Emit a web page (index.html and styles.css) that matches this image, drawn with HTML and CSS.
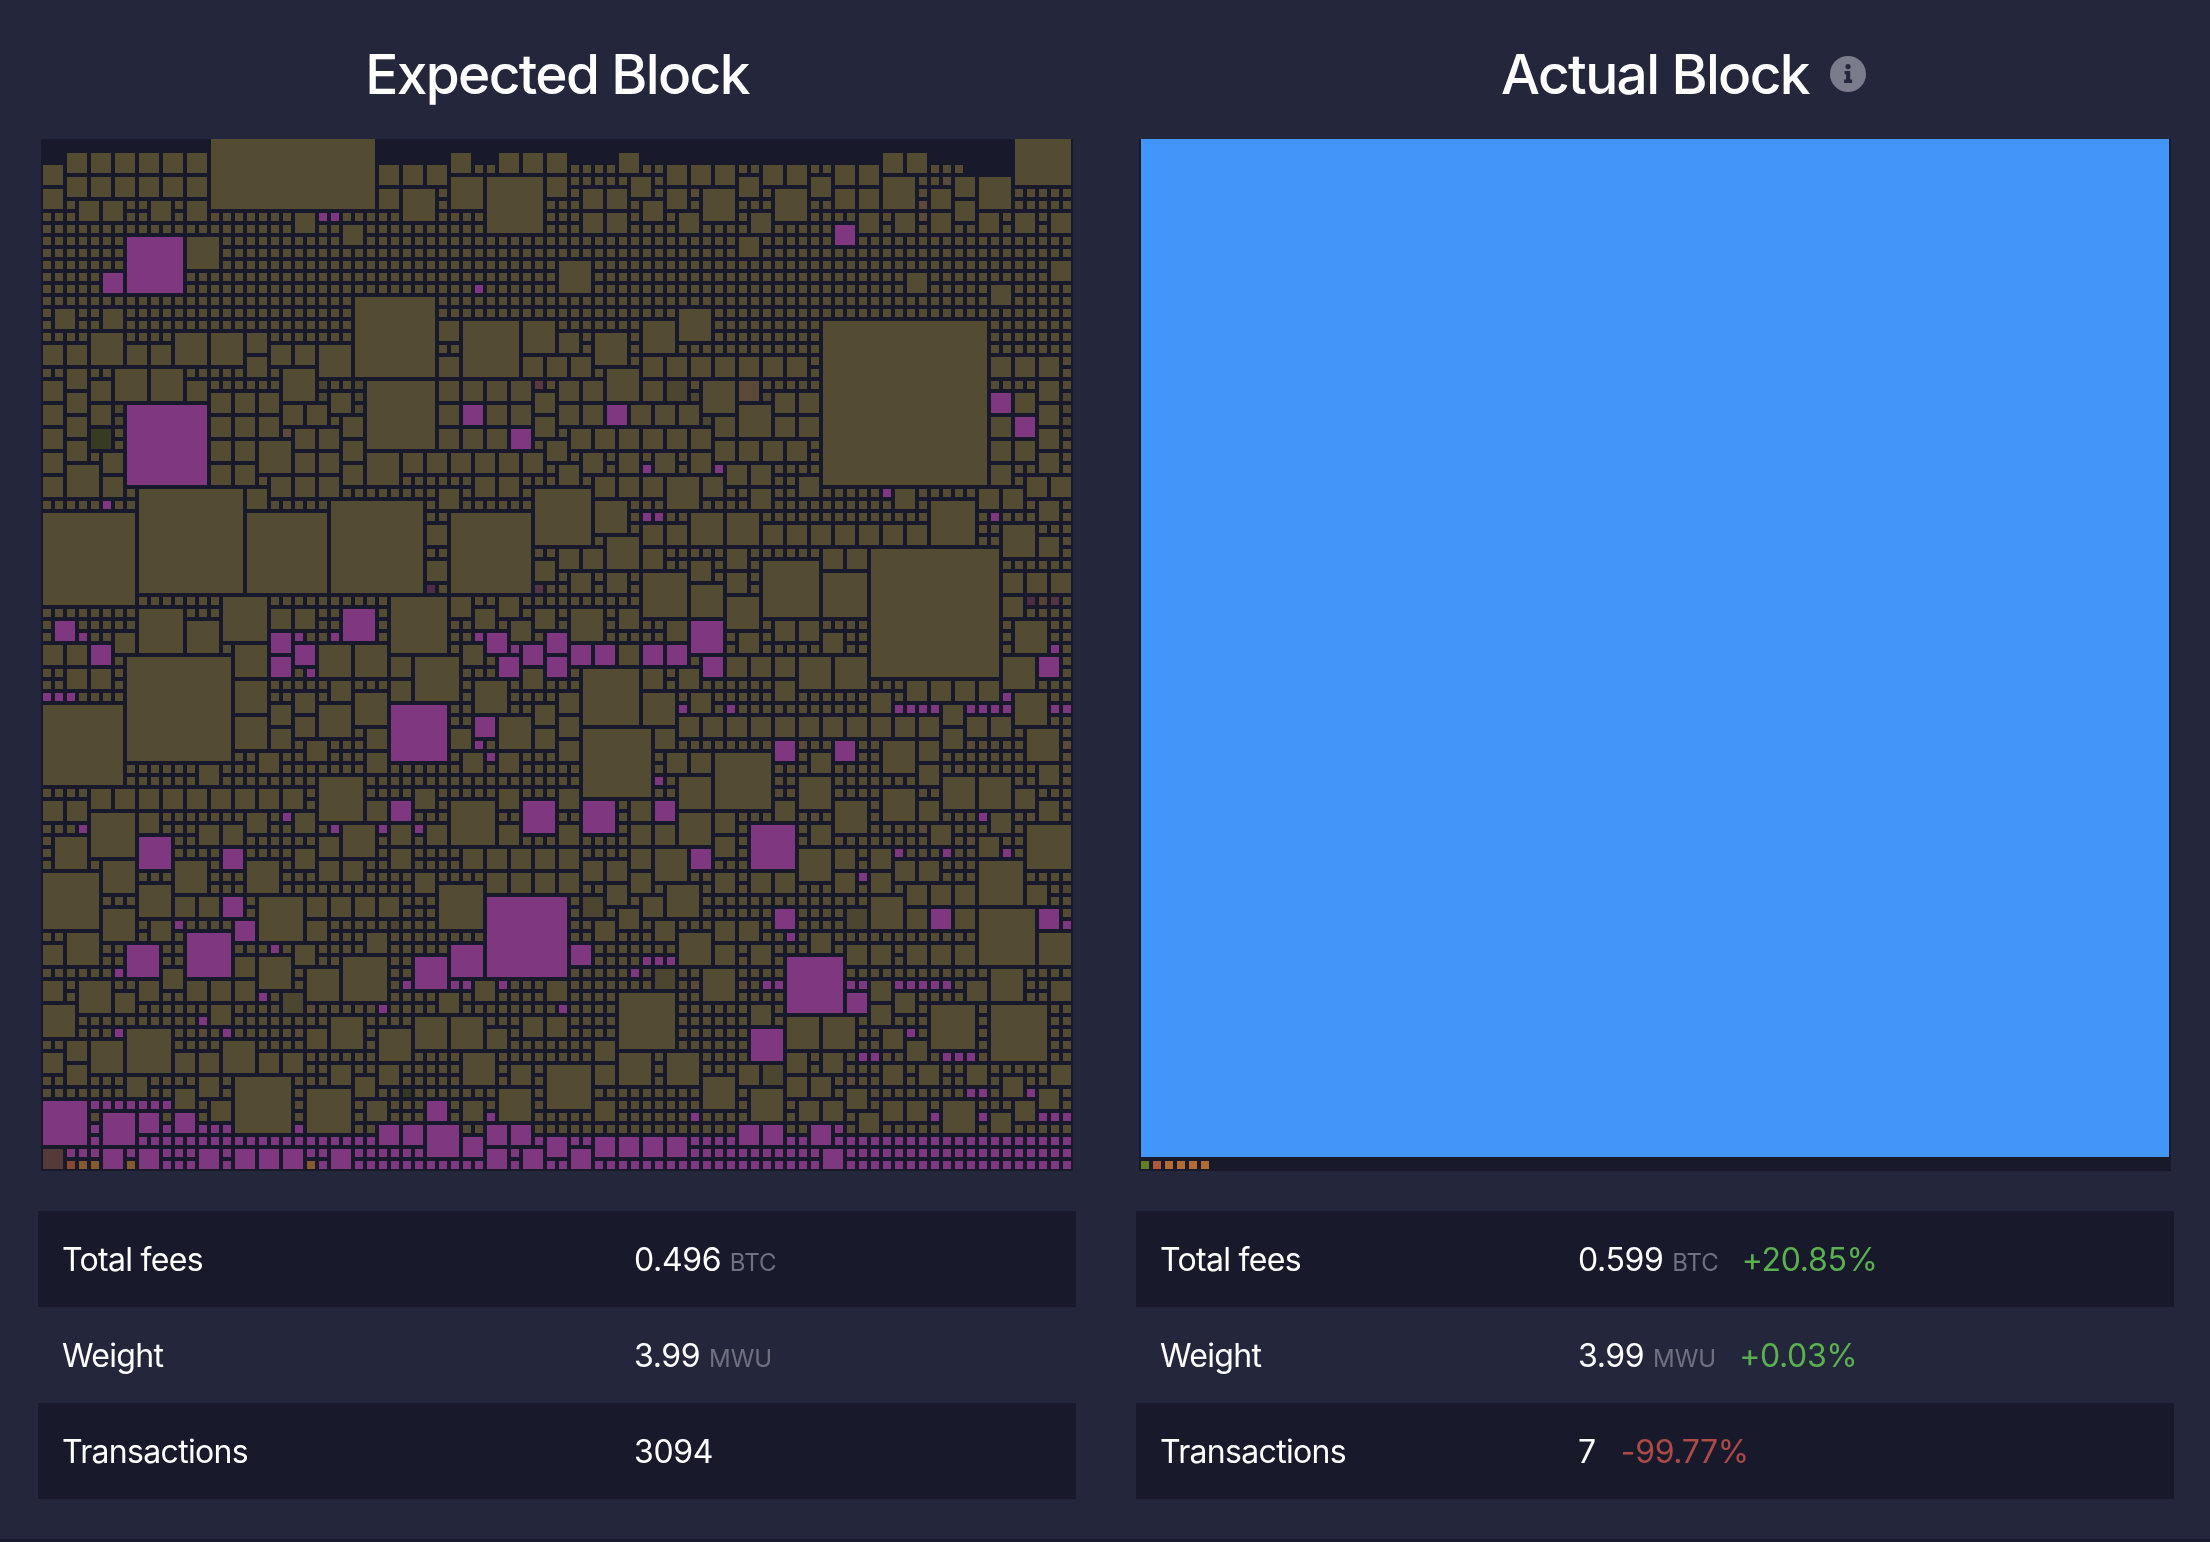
FILE: index.html
```html
<!DOCTYPE html>
<html lang="en">
<head>
<meta charset="utf-8">
<title>Block audit</title>
<link rel="stylesheet" href="styles.css">
</head>
<body>
<main class="audit">
  <section class="panel">
    <h3 class="panel-title"><span class="title-text">Expected Block</span></h3>
    <canvas class="block-view" id="expected" width="1032" height="1032"></canvas>
    <div class="stats stats-expected">
      <div class="stat-row"><span class="stat-label">Total fees</span><span class="stat-value">0.496 <span class="unit">BTC</span></span></div>
      <div class="stat-row"><span class="stat-label">Weight</span><span class="stat-value">3.99 <span class="unit">MWU</span></span></div>
      <div class="stat-row"><span class="stat-label">Transactions</span><span class="stat-value">3094</span></div>
    </div>
  </section>
  <section class="panel">
    <h3 class="panel-title"><span class="title-text">Actual Block<svg class="info-icon" viewBox="0 0 36 36" aria-hidden="true"><circle cx="18" cy="18" r="18" fill="#7a7c8b"/><circle cx="18" cy="10.6" r="2.6" fill="#24273c"/><path d="M14.6 15h5.6v8.6h1.9V27h-8v-3.4h2V18.2h-1.5z" fill="#24273c"/></svg></span></h3>
    <div class="block-view actual">
      <div class="actual-main"></div>
      <div class="actual-small">
        <i class="tx tx-green"></i><i class="tx tx-red"></i><i class="tx tx-orange"></i><i class="tx tx-orange"></i><i class="tx tx-orange"></i><i class="tx tx-orange"></i>
      </div>
    </div>
    <div class="stats stats-actual">
      <div class="stat-row"><span class="stat-label">Total fees</span><span class="stat-value">0.599 <span class="unit">BTC</span><span class="diff up">+20.85%</span></span></div>
      <div class="stat-row"><span class="stat-label">Weight</span><span class="stat-value">3.99 <span class="unit">MWU</span><span class="diff up">+0.03%</span></span></div>
      <div class="stat-row"><span class="stat-label">Transactions</span><span class="stat-value">7<span class="diff down">-99.77%</span></span></div>
    </div>
  </section>
</main>
<div class="footer-line"></div>
<script src="script.js"></script>
</body>
</html>
```
FILE: styles.css
```css
* { box-sizing: border-box; }
html, body { margin: 0; padding: 0; }
body {
  width: 2210px;
  height: 1542px;
  overflow: hidden;
  background: #24273c;
  color: #fff;
  font-family: Inter, "Liberation Sans", sans-serif;
  display: flex;
  flex-direction: column;
}
.audit {
  flex: 1;
  display: grid;
  grid-template-columns: 1038px 1038px;
  column-gap: 60px;
  padding: 0 36px 0 38px;
}
.panel { display: flex; flex-direction: column; }
.panel-title {
  margin: 0;
  height: 139px;
  padding-top: 40px;
  font-size: 55px;
  line-height: 68px;
  font-weight: 500;
  letter-spacing: -1.65px;
  text-align: center;
  color: #fff;
}
.title-text { position: relative; }
.info-icon {
  position: absolute;
  left: calc(100% + 21px);
  top: 15px;
  width: 36px;
  height: 36px;
}
.block-view {
  display: block;
  width: 1032px;
  height: 1032px;
  margin-left: 3px;
  background: #181a2c;
}
.actual { padding: 0 2px 2px; }
.actual-main { height: 1018px; background: #4296fa; }
.actual-small { display: flex; gap: 4px; margin-top: 4px; }
.tx { display: block; width: 8px; height: 8px; }
.tx-green { background: #5f8023; }
.tx-red { background: #ad5a3b; }
.tx-orange { background: #b46b30; }
.stats { margin-top: 40px; }
.stat-row {
  display: grid;
  height: 96px;
  align-items: center;
  padding-left: 24px;
  font-size: 32px;
  letter-spacing: -0.35px;
}
.stat-label { letter-spacing: -0.68px; }
.stat-row:nth-child(odd) { background: #181a2c; }
.stats-expected .stat-row { grid-template-columns: 572px 1fr; }
.stats-actual .stat-row { grid-template-columns: 418px 1fr; }
.unit {
  font-size: 24px;
  letter-spacing: 0;
  color: #6f7181;
}
.diff { margin-left: 25px; }
.unit + .diff { margin-left: 23px; }
.up { color: #5bb04f; }
.down { color: #ac4a46; }
.footer-line { height: 3px; background: #181a2c; flex: none; }
```
FILE: script.js
```js
// Block layout: [column, row, size in cells]; cells not covered by a block are single transactions.
var OLIVE = '#544b33', MAG = '#7f387f';
var olive = [
[2,1,2],[4,1,2],[6,1,2],[8,1,2],[10,1,2],[12,1,2],[0,2,2],[0,4,2],[2,3,2],[4,3,2],[6,3,2],[8,3,2],[10,3,2],[12,3,2],
[3,5,2],[5,5,2],[9,5,2],[12,5,2],[21,6,2],[28,2,2],[30,2,2],[32,2,2],[28,4,2],[30,4,3],[34,1,2],[38,1,2],[40,1,2],[42,1,2],
[34,3,3],[37,3,5],[42,3,2],[25,7,2],[12,8,3],[43,10,3],[26,13,7],[1,14,2],[5,14,2],[4,16,3],[11,16,3],[14,16,3],[17,16,2],
[33,15,2],[35,15,5],[40,15,3],[0,17,2],[2,17,2],[7,17,2],[9,17,2],[19,17,2],[21,17,2],[23,17,3],[33,18,2],[40,18,2],[42,18,2],[17,18,2],
[2,19,2],[6,19,3],[9,19,3],[20,19,3],[0,20,2],[4,20,2],[12,20,2],[27,20,6],[33,20,2],[35,20,2],[37,20,2],[39,20,2],[43,20,2],
[14,21,2],[16,21,2],[18,21,2],[24,21,2],[41,21,2],[2,21,2],[0,22,2],[4,22,2],[20,22,2],[22,22,2],[33,22,2],[37,22,2],[39,22,2],
[2,23,2],[14,23,2],[16,23,2],[18,23,2],[25,23,2],[41,23,2],[0,24,2],[21,24,2],[23,24,2],[33,24,2],[35,24,2],[37,24,2],
[2,25,2],[14,25,2],[16,25,2],[18,25,3],[25,25,2],[42,25,2],[0,26,2],[5,26,2],[21,26,2],[23,26,2],[27,26,3],[30,26,2],[32,26,2],[34,26,2],[36,26,2],[38,26,2],[40,26,2],
[2,27,3],[14,27,2],[16,27,2],[25,27,2],[43,27,2],[0,28,2],[5,28,2],[19,28,2],[21,28,2],[23,28,2],[36,28,2],[38,28,2],
[8,29,9],[17,29,2],[33,29,2],[41,29,5],[24,30,8],[0,31,8],[17,31,7],[34,31,7],[32,32,2],[32,35,2],[43,34,2],[41,35,2],
[15,38,4],[29,38,5],[34,38,2],[38,38,2],[8,39,4],[19,39,2],[21,39,2],[36,39,2],[41,39,2],[12,40,3],[39,40,2],[6,41,2],
[0,42,2],[2,42,2],[16,42,3],[23,42,3],[26,42,3],[35,42,2],[7,43,9],[29,43,2],[31,43,4],[2,44,2],[4,44,2],[40,44,2],
[16,45,3],[24,45,2],[29,45,2],[36,45,3],[21,46,2],[26,46,3],[0,47,7],[19,47,2],[23,47,3],[41,47,2],[16,48,3],[21,48,2],[38,48,3],[43,48,2],
[19,49,2],[27,49,2],[34,49,2],[41,49,2],[22,50,2],[18,51,2],[27,51,2],[35,51,2],[38,51,2],[13,52,2],[23,53,4],
[4,54,2],[6,54,2],[8,54,2],[10,54,2],[12,54,2],[14,54,2],[16,54,2],[18,54,2],[20,54,2],[31,54,2],[38,54,2],[0,55,2],[2,55,2],[27,55,2],[34,55,4],
[4,56,4],[8,56,2],[17,56,2],[21,56,2],[13,57,2],[15,57,2],[25,57,3],[29,57,2],[32,57,2],[38,57,2],[1,58,3],[23,58,2],
[21,59,2],[29,59,2],[35,59,2],[37,59,2],[39,59,2],[41,59,2],[43,59,2],[5,60,3],[11,60,3],[17,60,3],[23,60,2],[25,60,2],
[0,61,5],[31,61,2],[37,61,2],[39,61,2],[41,61,2],[43,61,2],[8,62,3],[33,62,4],[11,63,2],[13,63,2],[18,63,4],[22,63,2],[24,63,2],[26,63,2],[28,63,2],
[5,64,3],[9,65,2],[22,65,2],[2,66,3],[27,66,2],[0,67,2],[21,67,2],[16,68,2],[18,68,3],[25,68,4],[10,69,2],[22,69,3],
[0,70,2],[3,70,3],[8,70,2],[12,70,2],[14,70,2],[16,70,2],[36,70,2],[42,70,2],[6,71,2],[33,71,2],[0,72,3],[14,72,2],
[24,73,3],[31,73,3],[34,73,3],[40,73,2],[42,73,2],[7,74,4],[22,74,2],[28,74,3],[37,74,2],[2,75,2],[4,75,3],[15,75,3],
[0,76,2],[11,76,2],[13,76,2],[18,76,2],[20,76,2],[35,76,3],[2,77,2],[24,77,2],[28,77,2],[39,77,2],[42,77,4],
[7,78,2],[13,78,2],[16,78,5],[26,78,2],[11,79,2],[22,79,4],[38,79,3],[14,80,2],[27,80,2],[35,80,2],
// right half
[48,1,2],[52,2,2],[54,2,2],[56,2,2],[60,2,2],[62,2,2],[66,2,2],[68,2,2],[70,1,2],[72,1,2],[76,3,2],[78,3,3],
[49,3,2],[58,3,2],[64,3,2],[70,3,3],[45,4,2],[47,4,2],[52,4,2],[55,4,3],[61,4,3],[66,4,2],[68,4,2],[74,4,2],[50,5,2],[76,5,2],
[45,6,2],[47,6,2],[53,6,2],[59,6,2],[68,6,2],[71,6,2],[74,6,2],[78,6,2],[81,6,2],[84,6,2],[58,8,2],[84,10,2],[72,11,2],[79,12,2],
[53,14,3],[50,15,3],[65,15,14],[43,16,2],[46,16,3],[44,18,2],[50,18,2],[52,18,2],[54,18,2],[56,18,2],[58,18,2],[60,18,2],[62,18,2],[79,18,2],[81,18,2],[83,18,2],
[47,19,3],[45,20,2],[50,20,2],[55,20,3],[83,20,2],[61,21,2],[63,21,2],[81,21,2],[43,22,2],[45,22,2],[49,22,2],[51,22,2],[53,22,2],[58,22,3],[83,22,2],
[56,23,2],[61,23,2],[63,23,2],[79,23,2],[44,24,2],[46,24,2],[48,24,2],[50,24,2],[52,24,2],[54,24,2],[83,24,2],[56,25,2],[58,25,2],[60,25,2],[62,25,2],[79,25,2],[81,25,2],
[45,26,2],[48,26,2],[51,26,2],[54,26,2],[83,26,2],[57,27,2],[59,27,2],[79,27,2],[46,28,2],[48,28,2],[50,28,2],[52,28,3],[55,28,2],[63,28,2],[82,28,2],[84,28,2],
[59,29,2],[71,29,2],[78,29,2],[80,29,2],[46,30,3],[74,30,4],[83,30,2],[54,31,3],[57,31,3],[50,32,2],[52,32,2],[60,32,2],[62,32,2],[64,32,2],[66,32,2],[68,32,2],[70,32,2],[72,32,2],[80,32,3],
[47,33,3],[83,33,2],[45,34,2],[50,34,2],[57,34,2],[65,34,2],[67,34,2],[69,34,11],[54,35,2],[60,35,5],[44,36,2],[47,36,2],[50,36,4],[57,36,2],[65,36,4],[80,36,2],[82,36,2],[84,36,2],
[54,37,3],[57,38,3],[80,38,2],[44,39,3],[48,39,2],[52,40,2],[61,40,2],[63,40,2],[81,40,3],[58,41,2],[65,41,2],[48,42,2],
[57,43,2],[59,43,2],[61,43,2],[63,43,3],[66,43,3],[80,43,3],[45,44,5],[50,44,2],[53,44,2],[61,45,2],[72,45,2],[74,45,2],[76,45,2],[78,45,2],
[43,46,2],[50,46,3],[54,46,2],[69,46,2],[81,46,3],[75,47,2],[53,48,2],[55,48,2],[57,48,2],[59,48,2],[61,48,2],[63,48,2],[65,48,2],[67,48,2],[69,48,2],[71,48,2],[73,48,2],[77,48,2],[79,48,2],
[45,49,6],[51,49,2],[75,49,2],[82,49,3],[43,50,2],[70,50,3],[73,50,2],[52,51,2],[54,51,2],[56,51,5],[64,51,2],[73,52,2],[83,52,2],
[53,53,3],[63,53,3],[75,53,3],[78,53,3],[43,54,2],[70,54,3],[81,54,2],[49,55,2],[61,55,2],[66,55,3],[73,55,2],[83,55,2],
[53,56,3],[56,56,2],[79,56,2],[43,57,2],[49,57,2],[51,57,2],[64,57,2],[74,57,2],[82,57,4],[56,58,2],[78,58,2],
[43,59,2],[49,59,2],[51,59,3],[63,59,3],[66,59,2],[69,59,2],[45,60,2],[47,60,2],[71,60,2],[73,60,2],[78,60,4],
[43,61,2],[49,61,2],[56,61,2],[59,61,2],[61,61,2],[66,61,2],[69,61,2],[47,62,2],[52,62,3],[72,62,2],[74,62,2],[76,62,2],[82,62,2],
[50,63,2],[69,63,3],[48,64,2],[72,64,2],[76,64,2],[78,64,5],[46,65,2],[51,65,2],[56,65,2],[58,65,2],[53,66,3],[64,66,2],[83,66,3],
[56,67,2],[59,67,2],[67,67,2],[69,67,2],[72,67,2],[74,67,2],[76,67,2],[55,69,3],[79,69,3],[69,70,2],[77,70,2],[84,70,2],
[48,71,5],[71,71,2],[59,72,2],[69,72,2],[74,72,4],[79,72,5],[62,73,3],[65,73,3],[70,74,2],[46,75,2],[72,75,2],
[48,76,3],[52,76,3],[62,76,2],[65,76,2],[46,77,2],[58,77,2],[70,77,2],[73,77,2],[77,77,2],[84,77,2],[55,78,3],[62,78,2],[64,78,2],[80,78,2],
[59,79,3],[67,79,2],[83,79,2],[46,80,2],[63,80,2],[65,80,2],[70,80,2],[72,80,2],[75,80,3],[81,80,2],[68,81,2],[79,81,2]
];
var magenta = [
[7,8,5],[5,11,2],[7,22,7],[35,22,2],[39,24,2],[1,40,2],[25,39,3],[19,41,2],[37,41,2],[42,41,2],[4,42,2],[21,42,2],[40,42,2],[19,43,2],[38,43,2],[42,43,2],
[29,47,5],[36,48,2],[29,55,2],[40,55,3],[8,58,3],[15,59,2],[15,63,2],[37,63,7],[16,65,2],[12,66,4],[7,67,3],[34,67,3],[31,68,3],
[0,80,4],[32,80,2],[5,81,3],[8,81,2],[11,81,2],[28,82,2],[30,82,2],[32,82,3],[37,82,2],[39,82,2],[35,83,2],[42,83,2],
[5,84,2],[8,84,2],[13,84,2],[16,84,2],[18,84,2],[20,84,2],[24,84,2],[37,84,2],[40,84,2],
[66,7,2],[79,21,2],[47,22,2],[81,23,2],[54,40,3],[44,42,2],[46,42,2],[50,42,2],[52,42,2],[55,43,2],[83,43,2],
[61,50,2],[66,50,2],[45,55,3],[51,55,2],[59,57,4],[54,59,2],[61,64,2],[74,64,2],[83,64,2],[44,67,2],[62,68,5],[67,71,2],[59,74,3],
[58,82,2],[60,82,2],[64,82,2],[46,83,2],[48,83,2],[50,83,2],[52,83,2],[44,84,2],[65,84,2]
];
var magentaCells = [[23,6],[24,6],[36,12],[5,30],[3,41],[21,41],[24,41],[36,41],[39,42],[22,44],[0,46],[1,46],[2,46],[36,50],[37,51],[20,56],[3,57],[24,57],[28,57],[31,57],
[11,65],[19,67],[6,69],[30,70],[34,70],[35,70],[38,70],[18,71],[28,72],[43,72],[13,73],[6,74],[15,74],[4,80],[5,80],[6,80],[7,80],[8,80],[9,80],[10,80],[37,81],
[4,82],[10,82],[13,82],[14,82],[15,82],[21,82],[50,27],[56,27],[70,29],[50,31],[51,31],[79,31],[84,42],[80,46],[53,47],[57,47],[71,47],[72,47],[73,47],[74,47],[77,47],[78,47],[79,47],[80,47],[84,47],[85,47],
[51,53],[78,56],[71,59],[75,59],[80,59],[68,61],[85,65],[62,66],[50,68],[51,68],[52,68],[49,69],[60,70],[61,70],[67,70],[68,70],[71,70],[72,70],[73,70],[74,70],[75,70],
[72,74],[68,76],[69,76],[75,76],[76,76],[77,76],[77,79],[78,79],[82,79],[54,81],[74,81],[78,81],[83,81],[84,81],[85,81],[66,82]];
// Muted blocks and cells: [column, row, size, colour]
var DIM = '#4c4631', WARM = '#5c4a38';
var special = [
[4,24,2,'#363b22'],[0,84,2,'#553a3a'],[52,20,2,DIM],[58,20,2,WARM],[60,77,2,DIM],[45,63,2,DIM],[67,64,2,DIM],[51,69,2,DIM],[20,71,2,DIM],
[41,20,1,'#5a3a3f'],[32,37,1,'#4e2d47'],[41,37,1,'#533545'],[82,38,1,'#4c2d44'],[83,38,1,'#584235'],[84,38,1,'#523443'],[75,3,1,'#5a4a3d'],[73,5,1,WARM],[73,6,1,WARM],[54,4,1,WARM],
[20,24,1,'#5e4a3c'],[6,22,1,DIM],[6,23,1,DIM],[26,20,1,DIM],[26,21,1,DIM],[26,22,1,DIM],[23,20,1,DIM],[23,21,1,DIM],
[54,21,1,DIM],[60,21,1,DIM],[85,21,1,DIM],[85,22,1,DIM],[85,23,1,DIM],[85,24,1,DIM],[55,23,1,DIM],
[63,50,1,WARM],[85,50,1,WARM],[76,52,1,WARM],[77,50,1,WARM],[64,56,1,WARM],[82,56,1,WARM],[73,57,1,WARM],[77,58,1,WARM],[85,62,1,DIM],
[29,65,1,DIM],[22,72,1,WARM],[13,74,1,WARM],[21,74,1,WARM],[30,79,1,'#343a20'],[58,70,1,WARM],[54,70,1,WARM],[67,78,1,WARM],
[2,85,1,'#84492f'],[3,85,1,'#845a2e'],[4,85,1,'#845a2e'],[7,85,1,'#845a2e'],[22,85,1,'#845a2e']
];
// Cells at the top of the block that hold no transaction
var empty = [[0,1],[1,1],[36,1],[37,1],[44,1],[45,1],[46,1],[47,1]];
[[28,34],[50,70],[74,81]].forEach(function (span) {
  for (var c = span[0]; c < span[1]; c++) empty.push([c, 1]);
});
for (var c = 77; c < 81; c++) empty.push([c, 2]);
for (c = 0; c < 86; c++) empty.push([c, 0]);

var canvas = document.getElementById('expected');
var ctx = canvas.getContext('2d');
ctx.fillStyle = '#181a2c';
ctx.fillRect(0, 0, 1032, 1032);

var used = {};
function mark(c, r, w, h) {
  for (var i = c; i < c + w; i++) for (var j = r; j < r + h; j++) used[i + ',' + j] = 1;
}
function paint(c, r, w, h, col) {
  mark(c, r, w, h);
  var y = 2 + 12 * r, H = 12 * h - 4;
  if (r === 0) { H += y; y = 0; }
  ctx.fillStyle = col;
  ctx.fillRect(2 + 12 * c, y, 12 * w - 4, H);
}
empty.forEach(function (e) { used[e[0] + ',' + e[1]] = 1; });
paint(14, 0, 14, 6, OLIVE);
paint(81, 0, 5, 4, OLIVE);
olive.forEach(function (b) { paint(b[0], b[1], b[2], b[2], OLIVE); });
magenta.forEach(function (b) { paint(b[0], b[1], b[2], b[2], MAG); });
magentaCells.forEach(function (b) { paint(b[0], b[1], 1, 1, MAG); });
special.forEach(function (b) { paint(b[0], b[1], b[2], b[2], b[3]); });
for (var r = 0; r < 86; r++) {
  for (c = 0; c < 86; c++) {
    if (!used[c + ',' + r]) paint(c, r, 1, 1, r >= 83 ? MAG : OLIVE);
  }
}
```
